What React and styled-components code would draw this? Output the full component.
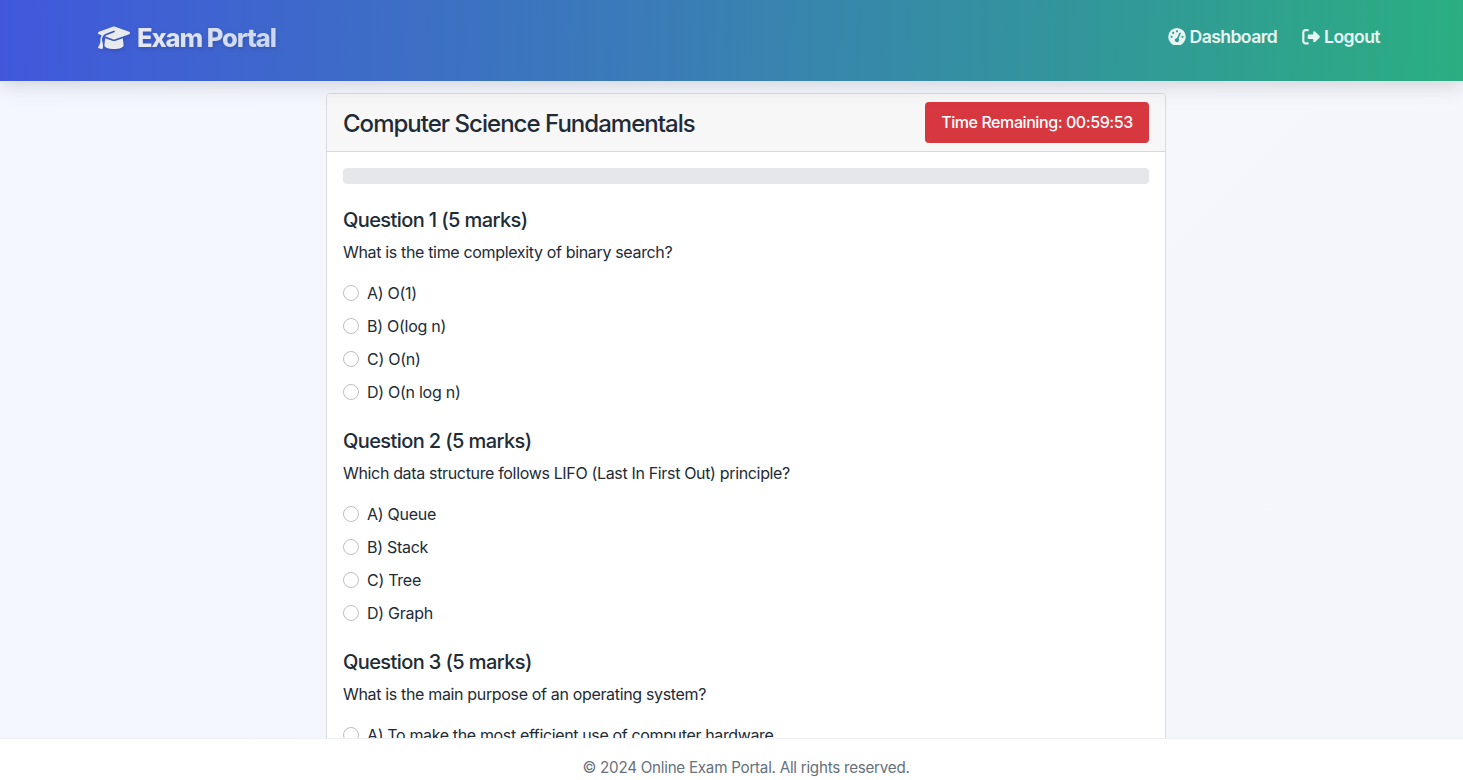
import React from "react";
import styled, { createGlobalStyle } from "styled-components";
import { FaGraduationCap, FaGaugeHigh, FaRightFromBracket } from "react-icons/fa6";

const GlobalStyle = createGlobalStyle`
  *, *::before, *::after { box-sizing: border-box; }
  body {
    margin: 0;
    overflow: hidden;
    color: #212b36;
    font: 400 16px/24px Inter, "Liberation Sans", sans-serif;
    letter-spacing: -0.3px;
  }
  h1, h2, h3, p { margin: 0; }
`;

const Page = styled.div`
  height: 100vh;
  display: flex;
  flex-direction: column;
  background: linear-gradient(135deg, #f5f7ff 0%, #f4f6fb 100%);
`;

const Header = styled.header`
  position: relative;
  z-index: 1;
  flex: none;
  height: 81px;
  padding: 0 83px 6px 98px;
  display: flex;
  align-items: center;
  justify-content: space-between;
  background: linear-gradient(92deg, #4158dc 0%, #3a7db6 46%, #2bae81 100%);
  box-shadow: 0 4px 20px rgba(0, 0, 0, 0.15);
`;

const Brand = styled.a`
  display: flex;
  align-items: center;
  gap: 7px;
  font-size: 25.6px;
  line-height: 38px;
  font-weight: 800;
  letter-spacing: -1.1px;
  background: linear-gradient(120deg, #f0f0f0 0%, #c9d4f2 100%);
  background-clip: text;
  -webkit-text-fill-color: transparent;
  filter: drop-shadow(1px 2px 2px rgba(0, 0, 0, 0.14));
  svg { width: 32px; height: 25.6px; color: #e8eaee; }
`;

const Nav = styled.nav`
  display: flex;
  gap: 25px;
  margin-top: -2px;
`;

const NavLink = styled.a`
  display: flex;
  align-items: center;
  gap: 4px;
  color: #e8f6f3;
  font-size: 17.6px;
  line-height: 26px;
  font-weight: 600;
  letter-spacing: -0.58px;
  svg { width: 18px; height: 17.6px; }
`;

const Main = styled.main`
  flex: 1;
  min-height: 0;
  overflow: hidden;
  padding: 12px 0 0 29px;
`;

const Card = styled.section`
  width: 840px;
  margin: 0 auto;
  background: #fff;
  border: 1px solid #d9dbdf;
  border-radius: 4px;
`;

const CardHeader = styled.div`
  height: 58px;
  padding: 0 16px;
  display: flex;
  align-items: center;
  justify-content: space-between;
  background: #f7f7f7;
  border-bottom: 1px solid #d7d8da;
  border-radius: 3px 3px 0 0;
`;

const Title = styled.h1`
  padding-top: 2px;
  font-size: 24px;
  line-height: 29px;
  font-weight: 500;
  letter-spacing: -0.98px;
`;

const Timer = styled.div`
  width: 224px;
  height: 41px;
  line-height: 41px;
  text-align: center;
  color: #fff;
  font-weight: 500;
  letter-spacing: -0.42px;
  background: #d7373f;
  border-radius: 4px;
`;

const CardBody = styled.div`
  padding: 16px;
`;

const Progress = styled.div`
  height: 16px;
  margin-bottom: 24px;
  background: #e4e8eb;
  border-radius: 4px;
`;

const Question = styled.article`
  margin-bottom: 25px;
`;

const QuestionTitle = styled.h2`
  margin-bottom: 8px;
  font-size: 20px;
  line-height: 24px;
  font-weight: 500;
  letter-spacing: -0.6px;
`;

const QuestionText = styled.p`
  margin-bottom: 16px;
  letter-spacing: -0.34px;
`;

const Option = styled.label`
  display: flex;
  align-items: center;
  gap: 8px;
  height: 25px;
  margin-bottom: 8px;
  letter-spacing: ${({ $long }) => ($long ? "-0.36px" : "-0.27px")};
`;

const Radio = styled.input.attrs({ type: "radio" })`
  appearance: none;
  width: 16px;
  height: 16px;
  margin: 0;
  background: #fff;
  border: 1px solid #bfbfbf;
  border-radius: 50%;
`;

const Footer = styled.footer`
  flex: none;
  height: 42px;
  padding: 17px 0 0 29px;
  overflow: hidden;
  text-align: center;
  color: #66717b;
  font-size: 15.2px;
  line-height: 24px;
  letter-spacing: -0.26px;
  background: #fff;
  border-top: 1px solid #eeeff1;
`;

const questions = [
  { text: "What is the time complexity of binary search?", options: ["A) O(1)", "B) O(log n)", "C) O(n)", "D) O(n log n)"] },
  { text: "Which data structure follows LIFO (Last In First Out) principle?", options: ["A) Queue", "B) Stack", "C) Tree", "D) Graph"] },
  { text: "What is the main purpose of an operating system?", options: ["A) To make the most efficient use of computer hardware"] },
];

export default function App() {
  return (
    <Page>
      <GlobalStyle />
      <Header>
        <Brand><FaGraduationCap /><span>Exam Portal</span></Brand>
        <Nav>
          <NavLink><FaGaugeHigh /><span>Dashboard</span></NavLink>
          <NavLink><FaRightFromBracket /><span>Logout</span></NavLink>
        </Nav>
      </Header>
      <Main>
        <Card>
          <CardHeader>
            <Title>Computer Science Fundamentals</Title>
            <Timer>Time Remaining: 00:59:53</Timer>
          </CardHeader>
          <CardBody>
            <Progress />
            {questions.map((q, i) => (
              <Question key={q.text}>
                <QuestionTitle>Question {i + 1} (5 marks)</QuestionTitle>
                <QuestionText>{q.text}</QuestionText>
                {q.options.map((o) => (
                  <Option key={o} $long={o.length > 30}><Radio name={`q${i}`} /><span>{o}</span></Option>
                ))}
              </Question>
            ))}
          </CardBody>
        </Card>
      </Main>
      <Footer>© 2024 Online Exam Portal. All rights reserved.</Footer>
    </Page>
  );
}
